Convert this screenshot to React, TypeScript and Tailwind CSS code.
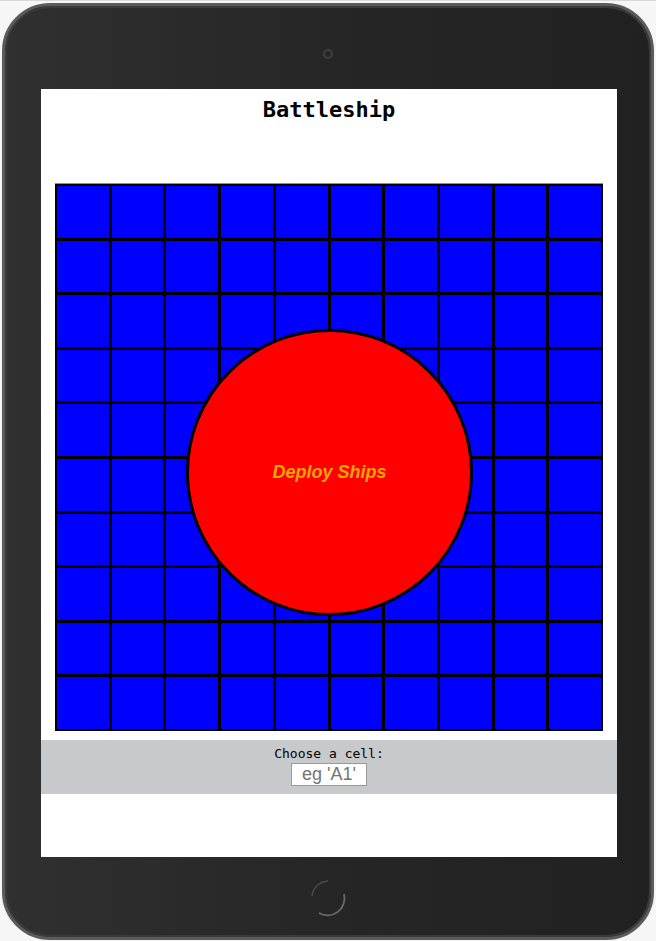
import React from "react";

export default function App() {
  const cells = Array.from({ length: 100 }, (_, i) => i);
  return (
    <div className="w-[656px] h-[941px] bg-[#f6f6f6] border-t border-[#d8d8d8] relative overflow-hidden">
      <div className="absolute left-[2px] top-[2px] w-[652px] h-[937px] rounded-[48px] border-[3px] border-[#5b5b5b] bg-gradient-to-r from-[#303030] via-[#262626] to-[#212121] shadow-[inset_0_0_0_2px_#3a3a3a] flex flex-col items-start">
        <div className="w-full h-[83px] flex items-center justify-center">
          <div className="w-[10px] h-[10px] rounded-full border-[2px] border-[#404040] bg-[#262626] translate-y-[6px]" />
        </div>
        <div className="ml-[36px] w-[576px] h-[768px] bg-white relative flex flex-col items-center">
          <h1 className="mt-[7px] text-[22px] font-bold leading-[28px] text-black" style={{ fontFamily: "'DejaVu Sans Mono', monospace" }}>
            Battleship
          </h1>
          <div className="mt-[60px] w-[548px] h-[547px] grid grid-cols-10 grid-rows-10 gap-[1px] bg-black border border-black shadow-[0_-1px_0_#8a8aa8]">
            {cells.map((i) => (
              <div key={i} className="bg-[#0000ff] border border-black" />
            ))}
          </div>
          <div className="mt-[9px] w-full h-[54px] bg-[#c8c9ca] flex flex-col items-center pt-[6px]">
            <div className="text-[13px] leading-[16px] text-black" style={{ fontFamily: "'DejaVu Sans Mono', monospace" }}>
              Choose a cell:
            </div>
            <input
              placeholder="eg 'A1'"
              className="mt-[1px] w-[76px] h-[23px] bg-white border border-[#9a9a9a] text-center text-[18px] leading-[20px] placeholder:text-[#757575] outline-none"
              style={{ fontFamily: "'Liberation Sans', Arial, sans-serif" }}
            />
          </div>
          <div className="absolute left-[145px] top-[240px] w-[287px] h-[287px] rounded-full bg-[#ff0000] border-[3px] border-black flex items-center justify-center">
            <span className="text-[18px] font-bold italic text-[#ffa500]" style={{ fontFamily: "'Liberation Sans', Arial, sans-serif" }}>
              Deploy Ships
            </span>
          </div>
        </div>
        <div className="w-full flex-1 flex items-center justify-center">
          <svg width="44" height="44" viewBox="0 0 44 44" className="translate-y-[1px]">
            <path d="M22 5 A 17 17 0 0 0 6 20" fill="none" stroke="#4a4a4a" strokeWidth="1.5" />
            <path d="M38 18 A 17 17 0 0 1 13 37" fill="none" stroke="#6a6a6a" strokeWidth="1.8" />
          </svg>
        </div>
      </div>
    </div>
  );
}
